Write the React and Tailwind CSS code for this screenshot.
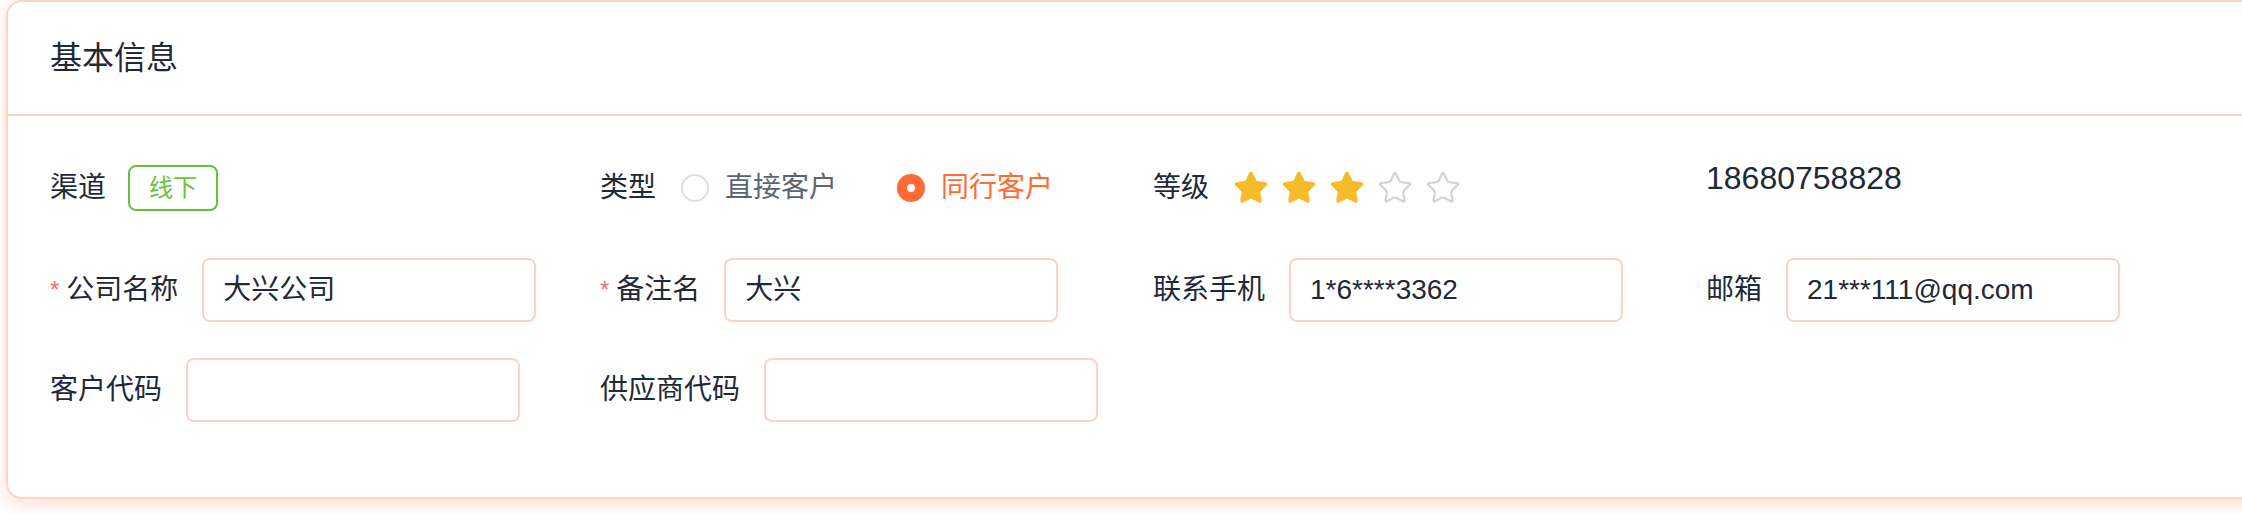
import { Star } from 'lucide-react';

// 基本信息卡片 - 2x 尺寸还原
const BORDER = 'border-[#fdd3c5]';

function Label({ required, children }) {
  return (
    <span className="flex items-center whitespace-nowrap text-[28px] text-[#1f2937]">
      {required && <span className="mr-[7px] text-[24px] text-[#f56c6c]">*</span>}
      {children}
    </span>
  );
}

function Field({ label, required, value }) {
  return (
    <div className="flex h-[64px] items-center gap-[24px]">
      <Label required={required}>{label}</Label>
      <div
        className={`flex h-[64px] w-[334px] items-center rounded-[8px] border-2 ${BORDER} bg-white px-[19px] text-[28px] text-[#1f2937]`}
      >
        {value}
      </div>
    </div>
  );
}

function Radio({ checked, children }) {
  return (
    <div className="flex items-center gap-[16px]">
      {checked ? (
        <span className="flex h-[28px] w-[28px] items-center justify-center rounded-full bg-[#ff6b35]">
          <span className="h-[8px] w-[8px] rounded-full bg-white" />
        </span>
      ) : (
        <span className="h-[28px] w-[28px] rounded-full border-2 border-[#dcdfe6] bg-white" />
      )}
      <span className={`text-[28px] ${checked ? 'text-[#ff6b35]' : 'text-[#5c6573]'}`}>{children}</span>
    </div>
  );
}

export default function App() {
  const level = 3;

  return (
    <div className="h-[514px] w-[2242px] overflow-hidden bg-white font-['Liberation_Sans','Noto_Sans_CJK_SC',sans-serif]">
      <div
        className={`ml-[6px] w-[2300px] rounded-[16px] border-2 ${BORDER} bg-white shadow-[0_6px_18px_rgba(252,140,100,0.28)]`}
      >
        {/* Header */}
        <div className={`flex h-[114px] items-center border-b-2 ${BORDER} px-[42px] text-[32px] text-[#1f2937]`}>
          基本信息
        </div>

        {/* Body */}
        <div className="px-[42px] pt-[40px] pb-[75px]">
          {/* 第一行 */}
          <div className="grid grid-cols-[550px_553px_553px_553px]">
            <div className="flex h-[64px] items-center gap-[22px]">
              <Label>渠道</Label>
              <span className="flex h-[46px] items-center rounded-[8px] border-2 border-[#67c23a] bg-white px-[19px] text-[24px] text-[#6cc240]">
                线下
              </span>
            </div>
            <div className="flex h-[64px] items-center">
              <Label>类型</Label>
              <div className="ml-[25px] flex items-center gap-[60px]">
                <Radio>直接客户</Radio>
                <Radio checked>同行客户</Radio>
              </div>
            </div>
            <div className="flex h-[64px] items-center gap-[24px]">
              <Label>等级</Label>
              <div className="flex items-center gap-[12px]">
                {[1, 2, 3, 4, 5].map((i) =>
                  i <= level ? (
                    <Star key={i} size={36} strokeWidth={1.6} color="#f7ba2a" fill="#f7ba2a" />
                  ) : (
                    <Star key={i} size={36} strokeWidth={1.4} color="#cdd2da" />
                  )
                )}
              </div>
            </div>
            <div className="self-start pt-[4px] text-[32px] leading-[36px] text-[#1f2937]">18680758828</div>
          </div>

          {/* 第二行 */}
          <div className="mt-[38px] grid grid-cols-[550px_553px_553px_553px]">
            <Field required label="公司名称" value="大兴公司" />
            <Field required label="备注名" value="大兴" />
            <Field label="联系手机" value="1*6****3362" />
            <Field label="邮箱" value="21***111@qq.com" />
          </div>

          {/* 第三行 */}
          <div className="mt-[36px] grid grid-cols-[550px_553px_553px_553px]">
            <Field label="客户代码" value="" />
            <Field label="供应商代码" value="" />
          </div>
        </div>
      </div>
    </div>
  );
}
